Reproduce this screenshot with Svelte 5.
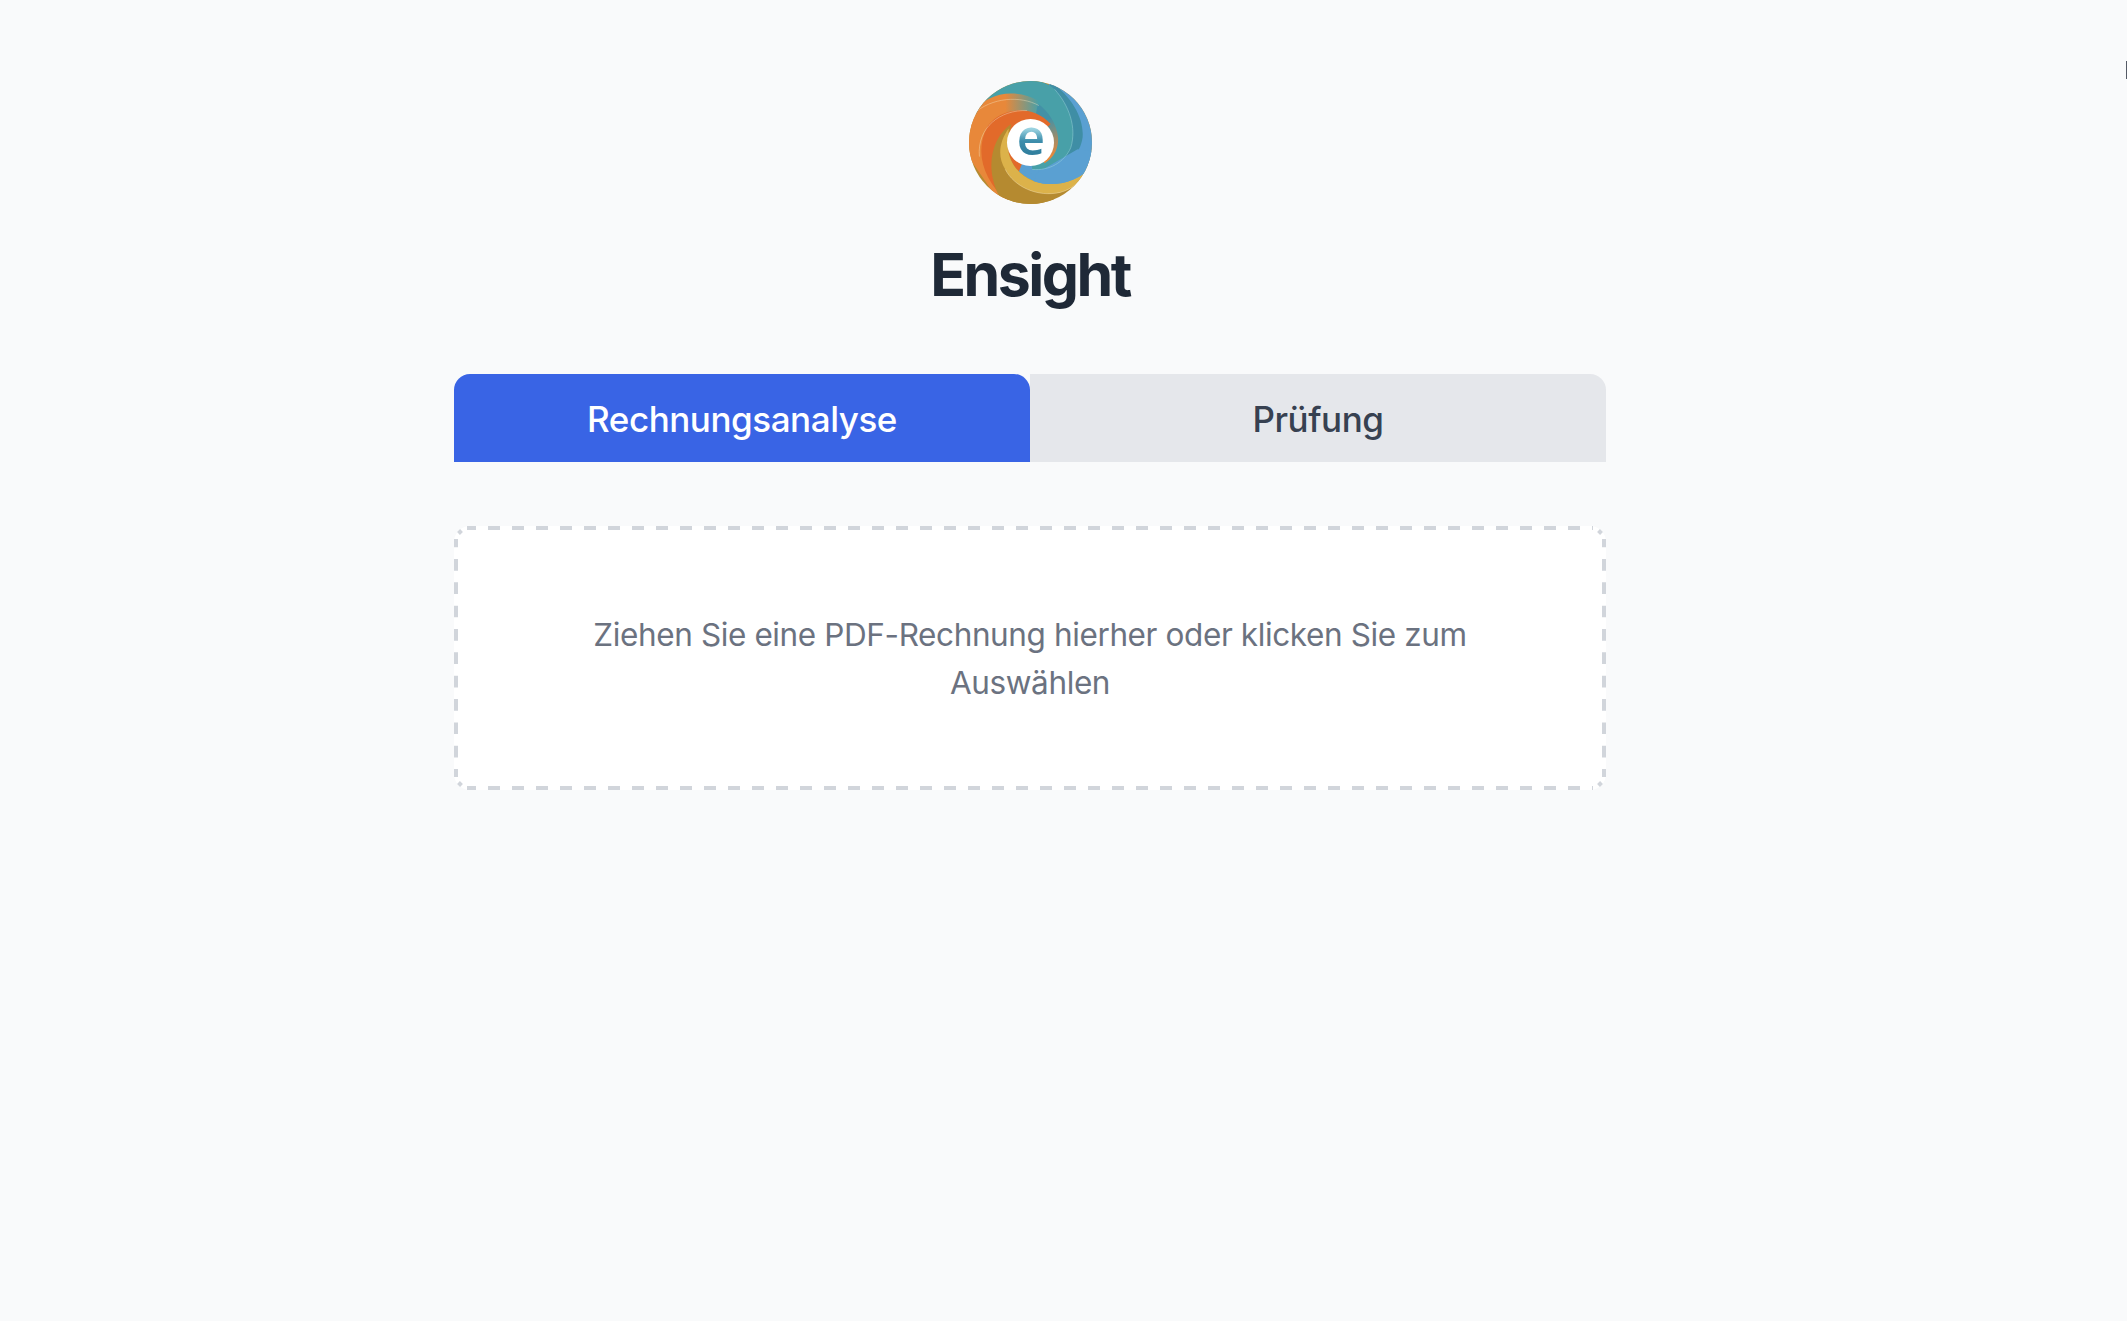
<script>
  let active = $state(0)
  const tabs = ['Rechnungsanalyse', 'Prüfung']
</script>

<div class="page">
  <span class="edge"></span>

  <main>
    <header>
      <svg class="logo" viewBox="57 37 366 366" width="123" height="123" aria-hidden="true">
        <defs>
          <clipPath id="disc"><circle cx="240" cy="220" r="183" /></clipPath>
          <linearGradient id="orangeTeal" x1="165" y1="0" x2="265" y2="0" gradientUnits="userSpaceOnUse">
            <stop offset="0" stop-color="#e8883a" />
            <stop offset="1" stop-color="#48a0a8" />
          </linearGradient>
          <linearGradient id="innerTeal" x1="285" y1="150" x2="310" y2="260" gradientUnits="userSpaceOnUse">
            <stop offset="0" stop-color="#4391a6" />
            <stop offset="1" stop-color="#e8883a" />
          </linearGradient>
          <linearGradient id="letter" x1="0" y1="180" x2="0" y2="258" gradientUnits="userSpaceOnUse">
            <stop offset="0" stop-color="#9ad2e0" />
            <stop offset="0.45" stop-color="#3d8eac" />
            <stop offset="1" stop-color="#2f7d9c" />
          </linearGradient>
        </defs>
        <g clip-path="url(#disc)">
          <rect x="40" y="20" width="400" height="400" fill="#b58a30" />
          <!-- yellow band under the blue blade -->
          <path d="M165 300 C190 350 260 385 330 368 C365 358 395 335 430 290 L300 240 Z" fill="#dcb24a" />
          <!-- blue blade -->
          <path d="M300 30 L450 120 L440 270 C400 330 320 360 250 335 C205 318 178 282 172 235 L240 220 Z" fill="#5aa0d2" />
          <!-- dark teal -->
          <path d="M300 40 C365 85 400 150 395 205 C388 255 350 290 305 303 C255 318 195 295 175 245 L240 220 Z" fill="#3f8ea5" />
          <path d="M345 285 C320 305 280 318 245 314 C215 310 190 285 178 255 L240 220 Z" fill="#5aa0d2" />
          <!-- teal top band -->
          <path d="M60 130 C110 20 260 10 312 62 C355 110 378 175 360 235 C340 280 295 305 245 300 L240 220 Z" fill="#48a0a8" />
          <!-- orange blade, fades to teal at the top -->
          <path d="M40 240 L62 140 C110 65 200 60 262 95 C295 118 315 160 320 205 L240 220 L150 400 Z" fill="url(#orangeTeal)" />
          <path d="M262 105 C292 125 318 165 322 205 C324 235 312 262 282 282 L240 220 Z" fill="url(#innerTeal)" />
          <!-- red orange blade -->
          <path d="M170 395 C100 330 72 250 112 172 C150 115 245 105 300 165 L240 220 Z" fill="#e26a2a" />
          <!-- bronze, left of the centre -->
          <path d="M182 165 C125 205 98 300 155 395 L240 420 L320 400 L250 335 C205 318 178 282 172 235 Z" fill="#b58a30" />
          <!-- yellow, left of the centre -->
          <path d="M175 178 C148 215 140 262 165 300 C190 350 260 385 330 368 L340 345 C310 352 275 345 250 335 C205 318 178 282 172 235 Z" fill="#dcb24a" />
          <path d="M250 335 C320 360 400 330 440 270 L450 250 L380 240 L260 310 Z" fill="#5aa0d2" />
          <!-- thin light seams -->
          <g fill="none" stroke="#f6e6c4" stroke-opacity=".6" stroke-width="2">
            <path d="M70 135 C125 85 210 80 265 110" />
            <path d="M88 262 C80 175 150 122 230 125" />
            <path d="M165 300 C190 350 260 385 330 368 C365 358 390 335 412 303" />
          </g>
          <g fill="none" stroke="#a6dde0" stroke-opacity=".65" stroke-width="2">
            <path d="M312 62 C355 110 378 175 360 235 C340 280 295 305 245 300" />
          </g>
        </g>
        <circle cx="240" cy="220" r="70" fill="#fff" />
        <text x="241" y="257" text-anchor="middle" fill="url(#letter)" class="mark">e</text>
      </svg>
      <h1>Ensight</h1>
    </header>

    <nav>
      {#each tabs as tab, i}
        <button class:active={active === i} onclick={() => (active = i)}>{tab}</button>
      {/each}
    </nav>

    <section class="drop">
      <svg class="dashes" viewBox="0 0 1152 264" width="1152" height="264" aria-hidden="true">
        <path class="h" d="M13 2H1139M13 262H1139" />
        <path class="v" d="M2 13V251M1150 13V251" />
        <path class="c" d="M4.5 7.5L7.5 4.5M1144.5 4.5L1147.5 7.5M4.5 256.5L7.5 259.5M1147.5 256.5L1144.5 259.5" />
      </svg>
      <p>Ziehen Sie eine PDF-Rechnung hierher oder klicken Sie zum Auswählen</p>
    </section>
  </main>
</div>

<style>
  :global(body) {
    background: #f9fafb;
  }

  .page {
    position: relative;
    width: 2060px;
    height: 1321px;
    font-family: Inter, "Liberation Sans", sans-serif;
  }

  .edge {
    position: absolute;
    left: 2126px;
    top: 61px;
    width: 1px;
    height: 18px;
    background: #555b66;
  }

  main {
    width: 1152px;
    margin: 0 auto;
    padding-top: 81px;
  }

  header {
    display: flex;
    flex-direction: column;
    align-items: center;
  }

  .logo {
    display: block;
  }

  .mark {
    font-family: "Open Sans", sans-serif;
    font-weight: 600;
    font-size: 146px;
  }

  h1 {
    margin: 35px 0 0;
    font-size: 59px;
    line-height: 72px;
    font-weight: 700;
    letter-spacing: -2.5px;
    color: #1f2937;
  }

  nav {
    display: flex;
    margin-top: 63px;
  }

  button {
    flex: 1;
    height: 88px;
    padding: 2px 0 0;
    border: 0;
    background: #e5e7eb;
    color: #374151;
    font: 500 35px/48px Inter, "Liberation Sans", sans-serif;
    letter-spacing: -0.45px;
    border-radius: 0 16px 0 0;
  }

  button.active {
    background: #3964e5;
    color: #fff;
    border-radius: 16px 16px 0 0;
  }

  .drop {
    position: relative;
    display: flex;
    align-items: center;
    justify-content: center;
    box-sizing: border-box;
    height: 264px;
    margin-top: 64px;
    padding: 2px 96px 0;
    background: #fff;
    border-radius: 16px;
  }

  .dashes {
    position: absolute;
    inset: 0;
    fill: none;
    stroke: #d1d5db;
    stroke-width: 4;
  }

  .h {
    stroke-dasharray: 12 12;
    stroke-dashoffset: 3;
  }

  .v {
    stroke-dasharray: 11.67 11.67;
    stroke-dashoffset: 3.33;
  }

  p {
    margin: 0;
    font-size: 31.5px;
    line-height: 48px;
    letter-spacing: -0.39px;
    color: #6b7280;
    text-align: center;
  }
</style>
